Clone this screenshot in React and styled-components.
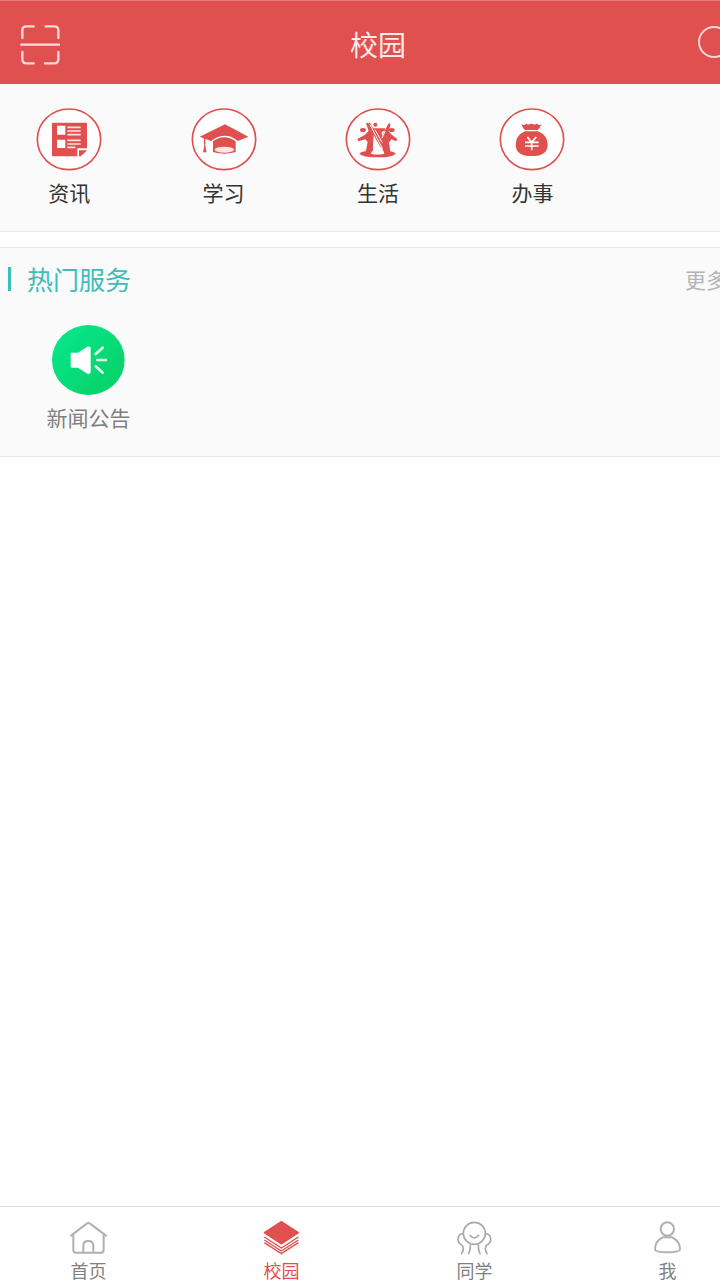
import React from 'react';
import styled, { createGlobalStyle } from 'styled-components';

const RED = '#df504f';

const categories = [
  { name: '资讯', Icon: NewsIcon },
  { name: '学习', Icon: StudyIcon },
  { name: '生活', Icon: LifeIcon },
  { name: '办事', Icon: AffairIcon },
];

const tabs = [
  { name: '首页', Icon: HomeIcon },
  { name: '校园', Icon: CampusIcon, active: true },
  { name: '同学', Icon: ClassmateIcon },
  { name: '我', Icon: MeIcon },
];

export default function App() {
  return (
    <>
      <GlobalStyle />
      <Screen>
        <Header>
          <IconButton aria-label={'扫一扫'}>
            <ScanIcon />
          </IconButton>
          <h1>校园</h1>
          <IconButton aria-label={'搜索'}>
            <SearchIcon />
          </IconButton>
        </Header>
        <main>
          <CategoryPanel>
            {categories.map(({ name, Icon }) => (
              <Category key={name}>
                <Icon />
                {name}
              </Category>
            ))}
          </CategoryPanel>
          <ServicePanel>
            <ServiceHead>
              <h2>热门服务</h2>
              <a href={'#more'}>
                更多
                <MoreIcon />
              </a>
            </ServiceHead>
            <ServiceGrid>
              <Service>
                <NoticeIcon />
                新闻公告
              </Service>
            </ServiceGrid>
          </ServicePanel>
        </main>
        <TabBar>
          {tabs.map(({ name, Icon, active }) => (
            <Tab key={name} href={'#' + name} $active={active}>
              <Icon />
              {name}
            </Tab>
          ))}
        </TabBar>
      </Screen>
    </>
  );
}

function ScanIcon() {
  return (
    <svg width={40} height={44} viewBox={'0 0 120 132'} fill={'none'} stroke={'#fbd9d9'} strokeWidth={7} strokeLinecap={'round'}>
      <path d={'M7 48V25Q7 13 19 13H41M77 13H103Q115 13 115 25V48M7 90V111Q7 124 19 124H41M75 124H103Q115 124 115 111V90M4 68H117'} />
    </svg>
  );
}

function SearchIcon() {
  return (
    <svg width={40} height={40} viewBox={'0 0 40 40'} fill={'none'} stroke={'#fbd9d9'} strokeWidth={2} strokeLinecap={'round'}>
      <circle cx={18} cy={18} r={15} />
      <path d={'M29 29L38 38'} />
    </svg>
  );
}

function MoreIcon() {
  return (
    <svg width={12} height={20} viewBox={'0 0 12 20'} fill={'none'} stroke={'#bbb'} strokeWidth={2}>
      <path d={'M2 3L9 10L2 17'} />
    </svg>
  );
}

// ring shared by the category icons
function Ring({ children }) {
  return (
    <svg width={66} height={63} viewBox={'0 0 198 189'} fill={RED}>
      <ellipse cx={99} cy={94} rx={95} ry={91} fill={'#fff'} stroke={RED} strokeWidth={5} />
      {children}
    </svg>
  );
}

function NewsIcon() {
  return (
    <Ring>
      <path d={'M50 44H151Q153 44 153 47V120L129 145H50Q48 145 48 142V47Q48 44 50 44Z'} />
      <path d={'M63 53H88V80H63ZM63 95H88V120H63Z'} fill={'#fff'} />
      <path d={'M94 58H134M94 69H134M94 80H134M94 97H134M94 108H134M94 118H118'} stroke={'#fbe3e3'} strokeWidth={5} />
      <path d={'M124 145V121H153V128L134 145Z'} fill={'#fff'} />
      <path d={'M129 145V127H153L149 131L134 145Z'} />
    </Ring>
  );
}

function StudyIcon() {
  return (
    <Ring>
      <path d={'M102 49L172 86L141 99Q102 67 60 99L26 86Z'} />
      <path d={'M41 90V110M41 114V133'} stroke={RED} strokeWidth={4} />
      <path d={'M36 133L41 106L47 133Z'} />
      <path d={'M66 100Q100 76 134 100V132Q100 142 66 132Z'} />
      <ellipse cx={100} cy={125} rx={29} ry={9} fill={'#fce6e6'} />
    </Ring>
  );
}

function LifeIcon() {
  return (
    <Ring>
      <circle cx={91} cy={50} r={6} />
      <ellipse cx={54} cy={66} rx={9} ry={6} />
      <ellipse cx={140} cy={66} rx={9} ry={6} />
      <path d={'M37 93L60 80L71 68L63 46L69 44L86 78L84 132H62L68 102L61 94L40 100Z'} />
      <path d={'M157 93L140 80L131 70L137 48L131 46L114 78L108 92L114 132H136L132 104L139 94L153 100Z'} />
      <path d={'M74 43L84 61H119L121 67L110 72L113 119L107 118L94 96L84 78L70 48Z'} />
      <path d={'M75 50L111 119M90 65L112 104'} stroke={'#fff'} strokeWidth={3} />
      <path d={'M86 98L94 112L90 124H84Z'} fill={'#fff'} />
      <path d={'M120 70L111 90'} stroke={'#fff'} strokeWidth={3} />
      <path d={'M43 137Q50 129 70 129H126Q146 129 152 137Q144 148 98 148Q52 148 43 137Z'} />
      <path d={'M82 128H115L118 137Q98 142 77 137Z'} fill={'#fff'} />
    </Ring>
  );
}

function AffairIcon() {
  return (
    <Ring>
      <path d={'M67 48Q73 53 78 50Q82 44 87 50Q97 44 107 50Q113 44 118 50Q122 52 127 48Q123 61 116 66H78Q71 61 67 48Z'} />
      <path d={'M78 70H117Q146 82 146 110Q146 144 98 144Q50 144 50 110Q50 82 78 70Z'} />
      <path d={'M85 87L98 103L112 87M98 103V127M78 103H119M78 114H119'} fill={'none'} stroke={'#fff'} strokeWidth={5} />
    </Ring>
  );
}

function NoticeIcon() {
  return (
    <svg width={73} height={70} viewBox={'0 0 219 210'} fill={'#fff'}>
      <defs>
        <linearGradient id={'notice'} x1={0} y1={0} x2={1} y2={1}>
          <stop offset={0} stopColor={'#06e890'} />
          <stop offset={1} stopColor={'#08cf62'} />
        </linearGradient>
      </defs>
      <ellipse cx={109} cy={105} rx={109} ry={105} fill={'url(#notice)'} />
      <path d={'M59 83H78L106 65H112Q116 65 116 69V142Q116 146 112 146H106L78 128H59Q56 128 56 125V86Q56 83 59 83Z'} />
      <path d={'M131 87L152 68M136 105H162M131 124L152 143'} stroke={'#e3fbef'} strokeWidth={8} strokeLinecap={'round'} />
    </svg>
  );
}

function HomeIcon() {
  return (
    <svg width={39} height={35} viewBox={'0 0 117 105'} fill={'none'} stroke={'#b0b0b0'} strokeWidth={6} strokeLinecap={'round'} strokeLinejoin={'round'}>
      <path d={'M6 47L53 11Q58 7 63 11L111 47'} />
      <path d={'M13 43V90Q13 98 21 98H96Q104 98 104 90V43'} />
      <path d={'M43 97V77Q43 63 58 63Q73 63 73 77V97'} />
    </svg>
  );
}

function CampusIcon() {
  return (
    <svg width={39} height={35} viewBox={'0 0 117 105'} fill={'none'} stroke={RED} strokeWidth={4}>
      <path d={'M58 5L109 38L58 72L7 38Z'} fill={RED} strokeLinejoin={'round'} />
      <path d={'M7 51L58 84L109 51M7 60L58 93L109 60M7 68L58 101L109 68'} />
    </svg>
  );
}

function ClassmateIcon() {
  return (
    <svg width={39} height={35} viewBox={'0 0 117 105'} fill={'none'} stroke={'#aaa'} strokeWidth={5} strokeLinecap={'round'}>
      <circle cx={58} cy={40} r={33} />
      <path d={'M45 46Q58 62 71 46'} />
      <path d={'M24 41C8 42 4 63 16 72Q32 81 20 101M92 41C108 42 112 63 100 72Q84 81 96 101'} />
      <path d={'M46 75Q47 89 41 101M70 75Q69 89 75 101'} />
    </svg>
  );
}

function MeIcon() {
  return (
    <svg width={39} height={35} viewBox={'0 0 117 105'} fill={'none'} stroke={'#b0b0b0'} strokeWidth={6}>
      <circle cx={58} cy={27} r={20} />
      <path d={'M44 52H72Q96 63 96 88Q96 97 58 97Q21 97 21 88Q21 63 44 52Z'} strokeLinejoin={'round'} />
    </svg>
  );
}

const GlobalStyle = createGlobalStyle`
  * {
    box-sizing: border-box;
  }

  body {
    margin: 0;
    overflow-x: hidden;
    background: #fff;
    font-family: 'Noto Sans CJK SC', 'Noto Sans', sans-serif;
  }

  h1, h2 {
    margin: 0;
    font-weight: 400;
  }

  a {
    text-decoration: none;
  }

  button {
    padding: 0;
    border: 0;
    background: none;
    font-family: inherit;
  }

  svg {
    display: block;
  }
`

// the page runs past both sides of the window
const Screen = styled.div`
  display: flex;
  flex-direction: column;
  min-height: 100vh;
  margin: 0 -44px 0 -8px;

  main {
    flex: 1;
  }
`

const Header = styled.header`
  display: flex;
  align-items: center;
  justify-content: space-between;
  height: 84px;
  padding: 2px 28px 0;
  border-top: 1px solid #e77b7a;
  background: ${RED};

  h1 {
    color: #fdeaea;
    font-size: 28px;
    line-height: 40px;
  }
`

const IconButton = styled.button`
  width: 40px;
`

const CategoryPanel = styled.section`
  display: grid;
  grid-template-columns: repeat(5, 1fr);
  padding: 24px 0 25px;
  border-bottom: 1px solid #e8e8e8;
  background: #fafafa;
`

const Category = styled.button`
  display: flex;
  flex-direction: column;
  align-items: center;
  gap: 7px;
  color: #333;
  font-size: 21px;
  line-height: 28px;
`

const ServicePanel = styled.section`
  margin-top: 15px;
  padding-bottom: 25px;
  border: solid #e8e8e8;
  border-width: 1px 0;
  background: #fafafa;
`

const ServiceHead = styled.div`
  display: flex;
  align-items: center;
  justify-content: space-between;
  height: 62px;
  padding: 0 16px;

  h2 {
    padding-left: 16px;
    border-left: 3px solid #3dbdb9;
    color: #3dbdb9;
    font-size: 26px;
    line-height: 24px;
  }

  a {
    display: flex;
    align-items: center;
    gap: 9px;
    color: #b4b4b4;
    font-size: 21px;
    line-height: 28px;
  }
`

const ServiceGrid = styled.div`
  display: grid;
  grid-template-columns: repeat(4, 1fr);
  padding-top: 15px;
`

const Service = styled(Category)`
  gap: 8px;
  color: #808080;
`

const TabBar = styled.nav`
  display: grid;
  grid-template-columns: repeat(4, 1fr);
  padding-top: 13px;
  border-top: 1px solid #dedede;
  background: #fff;
`

const Tab = styled.a`
  display: flex;
  flex-direction: column;
  align-items: center;
  gap: 5px;
  color: ${({ $active }) => ($active ? RED : '#808080')};
  font-size: 18px;
  line-height: 20px;
`
